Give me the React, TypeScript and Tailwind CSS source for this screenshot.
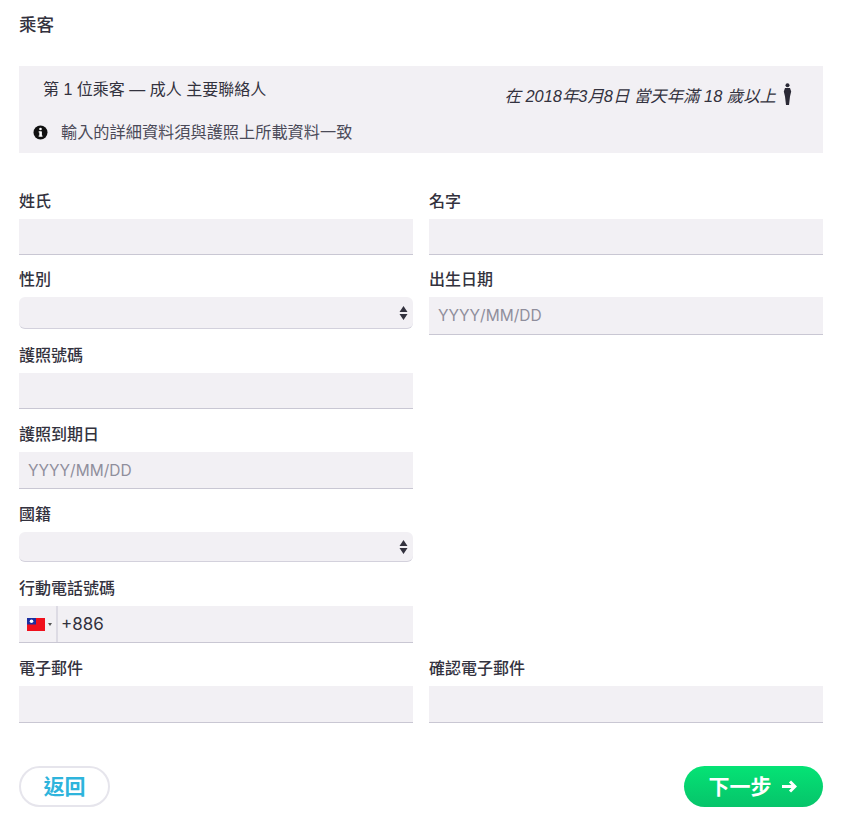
const FONT = 'font-["Liberation_Sans","Noto_Sans_CJK_TC",sans-serif]';

function Label({ children }: { children: string }) {
  return <label className="block h-5 mb-2 text-base leading-[22px] font-medium text-[#33323e]">{children}</label>;
}

function TextField({ label, placeholder, h = 'h-9', className = '' }: { label: string; placeholder?: string; h?: string; className?: string }) {
  return (
    <div className={className}>
      <Label>{label}</Label>
      <div className={`${h} flex items-center px-[9px] pt-px bg-[#f2f0f4] border-b border-[#c9c7d3] font-["Inter",sans-serif] text-[15.5px] text-[#8f8e9c]`}>
        {placeholder}
      </div>
    </div>
  );
}

function SelectField({ label, h = 'h-8', className = '' }: { label: string; h?: string; className?: string }) {
  return (
    <div className={className}>
      <Label>{label}</Label>
      <div className={`${h} flex items-center justify-end pr-[3px] bg-[#f2f0f4] rounded-md border-b border-[#d3d1dc]`}>
        <svg width="9" height="16" viewBox="0 0 9 16" className="mr-0.5 text-[#33323e]">
          <path d="M4.5 1 8.5 7H.5z M4.5 15 .5 9h8z" fill="currentColor" />
        </svg>
      </div>
    </div>
  );
}

function TaiwanFlag() {
  return (
    <svg width="18" height="13" viewBox="0 0 18 13">
      <rect width="18" height="13" fill="#f0101c" />
      <rect width="9" height="6.5" fill="#1c2fa0" />
      <circle cx="4.5" cy="3.25" r="1.8" fill="#fff" />
    </svg>
  );
}

export default function App() {
  return (
    <div className={`${FONT} w-[850px] h-[827px] bg-white pl-[19px] pr-[27px] pt-[14px] overflow-hidden`}>
      <h1 className="h-[22px] text-[17.5px] leading-[22px] font-medium text-[#33323e]">乘客</h1>

      {/* Passenger banner */}
      <div className="mt-[30px] h-[87px] bg-[#f2f0f4]">
        <div className="flex justify-between items-start pl-6 pr-[31px] pt-[14px]">
          <span className="text-base leading-5 text-[#33323e]">第 1 位乘客 — 成人 主要聯絡人</span>
          <span className="flex items-start gap-[7px] italic text-[16.4px] leading-5 text-[#33323e] mt-[6px]">
            在 2018年3月8日 當天年滿 18 歲以上
            <svg width="9" height="22" viewBox="0 0 9 22" className="-mt-[3px]" fill="#2b2a36">
              <circle cx="4.5" cy="2.2" r="2" />
              <path d="M2 5h5l1.2 3.5L7 13.5l-1 8.5H3l-1-8.5L.8 8.5z" />
            </svg>
          </span>
        </div>
        <div className="flex items-center pl-[14px] mt-4 text-[16.2px] leading-5 text-[#4b4a58]">
          <svg width="15" height="15" viewBox="0 0 15 15">
            <circle cx="7.5" cy="7.5" r="7" fill="#111" />
            <rect x="6.3" y="6.4" width="2.6" height="5" fill="#fff" />
            <rect x="5.6" y="6.4" width="2" height="1" fill="#fff" />
            <rect x="5.6" y="10.6" width="4" height="1" fill="#fff" />
            <circle cx="7.5" cy="4" r="1.3" fill="#fff" />
          </svg>
          <span className="ml-[13px]">輸入的詳細資料須與護照上所載資料一致</span>
        </div>
      </div>

      <div className="mt-[38px] grid grid-cols-2 gap-x-4">
        <TextField label="姓氏" />
        <TextField label="名字" />
      </div>

      <div className="mt-[14px] grid grid-cols-2 gap-x-4">
        <div>
          <SelectField label="性別" />
          <TextField label="護照號碼" className="mt-4" />
          <TextField label="護照到期日" placeholder="YYYY/MM/DD" h="h-[37px]" className="mt-[15px]" />
          <SelectField label="國籍" h="h-[30px]" className="mt-[15px]" />
          <div className="mt-4">
            <Label>行動電話號碼</Label>
            <div className="h-[37px] flex items-center bg-[#f2f0f4] border-b border-[#c9c7d3]">
              <div className="w-[39px] h-full flex items-center pl-2 gap-[3px] border-r-2 border-[#dddbe4] shrink-0">
                <TaiwanFlag />
                <span className="border-x-[2px] border-t-[3px] border-x-transparent border-t-[#555]" />
              </div>
              <span className="ml-[3px] pt-px font-['Inter',sans-serif] text-[17px] text-[#33323e]">+886</span>
            </div>
          </div>
        </div>
        <div>
          <TextField label="出生日期" placeholder="YYYY/MM/DD" h="h-[38px]" />
        </div>
      </div>

      <div className="mt-[15px] grid grid-cols-2 gap-x-4">
        <TextField label="電子郵件" h="h-[37px]" />
        <TextField label="確認電子郵件" h="h-[37px]" />
      </div>

      <div className="mt-[43px] flex justify-between items-center">
        <button className="w-[91px] h-[41px] rounded-full border-2 border-[#e6e5ec] bg-white text-[#2eb4dc] text-[21px] font-bold">
          返回
        </button>
        <button className="w-[139px] h-[41px] rounded-full bg-gradient-to-b from-[#05e375] to-[#06c46a] text-white text-[21px] font-bold flex items-center justify-center gap-[9px] pr-[2px]">
          下一步
          <svg width="16" height="13" viewBox="0 0 16 13" fill="none" stroke="currentColor" strokeWidth="3">
            <path d="M1 6.5h13M9 1.5l5 5-5 5" />
          </svg>
        </button>
      </div>
    </div>
  );
}
